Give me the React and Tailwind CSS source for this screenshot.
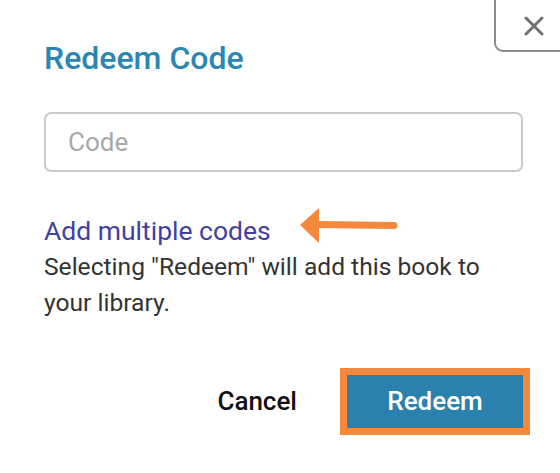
import React from 'react';

export default function App() {
    return (
        <div className="relative w-[560px] h-[473px] overflow-hidden bg-white font-['Roboto',sans-serif]">
            {/* Close button, clipped at the top-right corner */}
            <button className="absolute left-[494px] top-[-10px] w-[80px] h-[62px] border-2 border-[#8a8a8a] rounded-bl-[9px] flex items-center justify-center pt-[10px]">
                <svg width="20" height="20" viewBox="0 0 20 20">
                    <path d="M2 2 L18 18 M18 2 L2 18" stroke="#707070" strokeWidth="3" strokeLinecap="round" />
                </svg>
            </button>

            <div className="pl-[44px] pr-[37px] pt-[39px]">
                <h2 className="text-[32px] leading-[38px] font-medium text-[#2b86b3]">Redeem Code</h2>

                <input
                    type="text"
                    placeholder="Code"
                    className="mt-[35px] w-full h-[60px] border-2 border-[#c9c9c9] rounded-[7px] pl-[22px] text-[26px] text-[#333] placeholder-[#a9a9a9] outline-none"
                />

                <div className="mt-[41px] leading-[36px]">
                    <a className="block text-[26.5px] text-[#4141a0]">Add multiple codes</a>
                    <p className="text-[24.6px] text-[#333333]">Selecting "Redeem" will add this book to your library.</p>
                </div>
            </div>

            {/* Annotation arrow */}
            <svg className="absolute left-[296px] top-[204px]" width="106" height="44" viewBox="0 0 106 44">
                <path d="M20 20.5 L98 21.5" stroke="#f5883a" strokeWidth="7" strokeLinecap="round" />
                <path d="M4 21 L23 4 L23 39 Z" fill="#f5883a" />
            </svg>

            <div className="flex justify-end items-center pr-[30px] mt-[47px]">
                <button className="text-[26px] font-medium text-[#111] mr-[43px]">Cancel</button>
                <div className="border-[7px] border-[#f5883a]">
                    <button className="w-[176px] h-[53px] bg-[#2a81ad] text-white text-[26px] font-medium">Redeem</button>
                </div>
            </div>
        </div>
    );
}
